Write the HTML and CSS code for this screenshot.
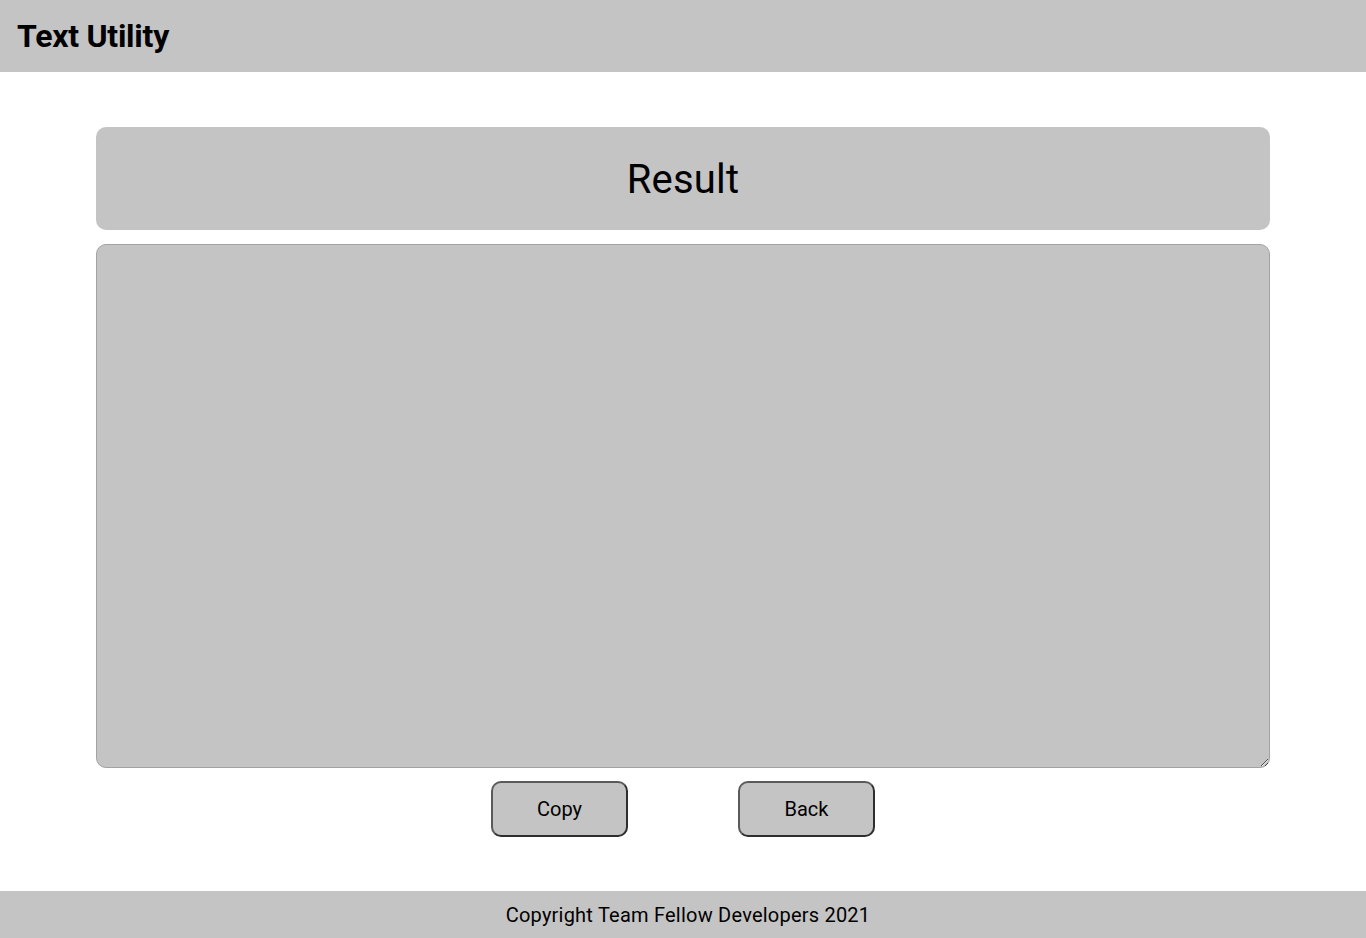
FILE: index.html
```html
<!DOCTYPE html>
<html lang="en">
<head>
<meta charset="utf-8">
<title>Text Utility</title>
<link rel="stylesheet" href="styles.css">
</head>
<body>
<header class="topbar">
  <h1 class="brand">Text Utility</h1>
</header>
<main class="content">
  <div class="result-head">Result</div>
  <textarea class="result-box"></textarea>
  <div class="actions">
    <button class="btn" type="button">Copy</button>
    <button class="btn" type="button">Back</button>
  </div>
</main>
<footer class="footer">Copyright Team Fellow Developers 2021</footer>
</body>
</html>
```

FILE: styles.css
```css
* { box-sizing: border-box; }
html, body { margin: 0; padding: 0; }
body {
  font-family: Roboto, "Liberation Sans", sans-serif;
  color: #000;
  background: #fff;
  min-height: 938px;
  display: flex;
  flex-direction: column;
}
.topbar {
  height: 72px;
  background: #c4c4c4;
  display: flex;
  align-items: center;
  padding-left: 17px;
}
.brand {
  margin: 0;
  font-size: 32px;
  font-weight: 700;
  letter-spacing: -0.25px;
}
.content {
  width: 1174px;
  margin: 55px auto 0;
  flex: 1;
  display: flex;
  flex-direction: column;
}
.result-head {
  height: 103px;
  background: #c4c4c4;
  border-radius: 10px;
  display: flex;
  align-items: center;
  justify-content: center;
  font-size: 40px;
  letter-spacing: 0.2px;
  padding-top: 2px;
}
.result-box {
  display: block;
  margin-top: 14px;
  width: 1174px;
  height: 524px;
  background: #c4c4c4;
  border: 1px solid #a3a3a3;
  border-radius: 10px;
  font-family: Roboto, "Liberation Sans", sans-serif;
  font-size: 16px;
  padding: 8px;
  resize: both;
}
.actions {
  margin-top: 13px;
  display: flex;
  justify-content: center;
  gap: 110px;
}
.btn {
  width: 137px;
  height: 56px;
  background: #c4c4c4;
  border: 2px solid #2e2e2e;
  border-top-color: #5a5a5a;
  border-left-color: #5a5a5a;
  border-radius: 10px;
  font-family: Roboto, "Liberation Sans", sans-serif;
  font-size: 20px;
  color: #000;
  padding: 0;
}
.footer {
  height: 47px;
  background: #c4c4c4;
  display: flex;
  align-items: center;
  justify-content: center;
  font-size: 20px;
  letter-spacing: 0.22px;
  padding-left: 10px;
}
```
